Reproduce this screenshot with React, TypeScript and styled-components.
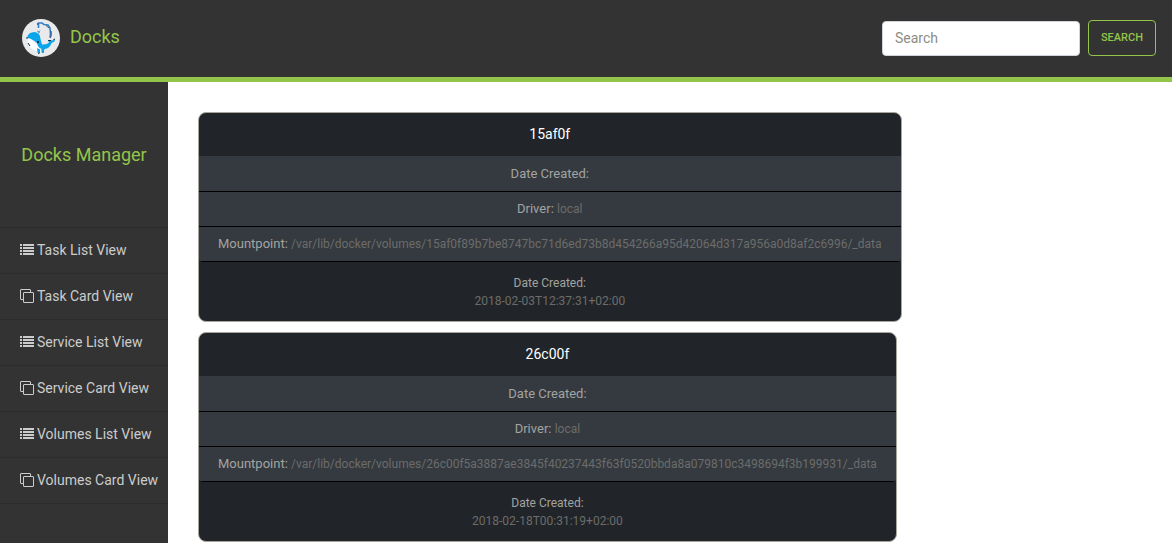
import React from "react";
import styled, { createGlobalStyle } from "styled-components";

const GlobalStyle = createGlobalStyle`
  *, *::before, *::after { box-sizing: border-box; }
  body {
    margin: 0;
    background: #fff;
    font-family: Roboto, "Liberation Sans", sans-serif;
    font-size: 14px;
    line-height: 22px;
  }
`;

const Page = styled.div`
  display: flex;
  flex-direction: column;
  height: 100vh;
  overflow: hidden;
`;

const Navbar = styled.header`
  display: flex;
  align-items: center;
  justify-content: space-between;
  flex: none;
  padding: 18px 16px 20px 22px;
  background: #333;
  border-bottom: 5px solid #93c54b;
`;

const Brand = styled.a`
  display: flex;
  align-items: center;
  gap: 10px;
  color: #93c54b;
  font-size: 18px;
  line-height: 36px;
  text-decoration: none;
`;

const BrandName = styled.span`
  padding-bottom: 1px;
`;

const SearchForm = styled.form`
  display: flex;
  align-items: flex-end;
  gap: 8px;
  padding-top: 2px;
  padding-bottom: 1px;
`;

const SearchInput = styled.input`
  width: 198px;
  height: 35px;
  padding: 0 12px 1px;
  border: 1px solid #ced4da;
  border-radius: 4px;
  background: #fff;
  color: #3e3f3a;
  font: inherit;

  &::placeholder { color: #8e8c84; opacity: 1; }
`;

const SearchButton = styled.button`
  height: 36px;
  padding: 0 12px;
  border: 1px solid #93c54b;
  border-radius: 4px;
  background: transparent;
  color: #93c54b;
  font: 500 11px/20px Roboto, "Liberation Sans", sans-serif;
  text-transform: uppercase;
`;

const Body = styled.div`
  display: flex;
  flex: 1;
  min-height: 0;
`;

const Sidebar = styled.aside`
  flex: none;
  width: 168px;
  background: #333;
`;

const SidebarTitle = styled.h2`
  margin: 0;
  padding: 60px 0 59px;
  color: #93c54b;
  font-size: 18px;
  font-weight: 400;
  line-height: 26px;
  text-align: center;
`;

const Menu = styled.ul`
  margin: 0;
  padding: 0;
  list-style: none;
  border-top: 1px solid #2c2c2c;
`;

const MenuItem = styled.li`
  border-bottom: 1px solid #2c2c2c;
`;

const MenuLink = styled.a`
  display: flex;
  align-items: center;
  gap: 3px;
  padding: 11px 0 12px 20px;
  color: #ccc;
  text-decoration: none;
  white-space: nowrap;
`;

const Content = styled.main`
  display: flex;
  flex: 1;
  flex-direction: column;
  align-items: flex-start;
  gap: 10px;
  min-width: 0;
  padding: 30px;
  overflow: hidden;
`;

const Card = styled.article`
  flex: none;
  overflow: hidden;
  border: 1px solid #a8a69c;
  border-radius: 8px;
  background: #212529;
  color: #a3a3a0;
  text-align: center;
`;

const CardTitle = styled.h3`
  margin: 0;
  padding: 10px 8px 11px;
  color: #fff;
  font-size: 14px;
  font-weight: 400;
  line-height: 22px;
`;

const Details = styled.ul`
  margin: 0;
  padding: 1px 0 0;
  border-radius: 0 0 4px 4px;
  background: #343a40;
  list-style: none;
  overflow: hidden;
`;

const Detail = styled.li`
  padding: 8px 19px;
  border-bottom: 1px solid #000;
  font-size: 13px;
  line-height: 18px;
  white-space: nowrap;
`;

const Value = styled.span`
  color: #6c6c6a;
  font-size: 12px;
`;

const CardFooter = styled.footer`
  display: flex;
  flex-direction: column;
  padding: 12px 8px 11px;
  font-size: 12px;
  line-height: 18px;
`;

function ListIcon() {
  return (
    <svg width="14" height="14" viewBox="0 0 14 14" fill="currentColor" aria-hidden="true">
      {[1, 4, 7, 10].map((y) => (
        <React.Fragment key={y}>
          <rect x="0" y={y} width="2" height="2" />
          <rect x="3" y={y} width="11" height="2" />
        </React.Fragment>
      ))}
    </svg>
  );
}

function CardIcon() {
  return (
    <svg width="14" height="14" viewBox="0 0 14 14" fill="none" stroke="currentColor" aria-hidden="true">
      <path d="M3.5 10.5H1A.5.5 0 0 1 .5 10V1A.5.5 0 0 1 1 .5H10A.5.5 0 0 1 10.500 1V3.500" />
      <rect x="3.500" y="3.500" width="10" height="10" rx=".5" />
    </svg>
  );
}

function Logo() {
  return (
    <svg width="38" height="38" viewBox="0 0 38 38" aria-hidden="true">
      <circle cx="19" cy="19" r="19" fill="#e9eaec" />
      <path d="M16.500 9V4L20 4L22 5.500L26 6L28 9L28.500 15L28 18.500" fill="none" stroke="#3a7fc4" strokeWidth="1.600" />
      <path d="M15.700 6V4M24 6.500L27 9M29.200 12V17L28 19" fill="none" stroke="#24364a" strokeWidth=".8" />
      <path d="M5.500 19L9 20L14 25L18 26L19 32L14 32Q8 29 6 25Z" fill="#fff" />
      <path d="M5 19Q6 13 12.500 13Q18.500 14 18.500 20L20 25.500Q25 26 27 23.500L26 21L30 21.500L33 20L32.500 22.500L29.500 24Q28 29.500 22.500 30L21.500 34L19.500 33V30L17 28.500Q15 26 15 24Q9 19 5 19Z" fill="#0aa5ea" />
      <path d="M15 29L18 30.500V34.500L15.500 33.500Z" fill="#0aa5ea" />
      <path d="M5 18V20M6 24L8 27M26 21.500H29M31.500 20.500L33 20M16 34.500L17.500 34M20.500 33.500L21.500 33" fill="none" stroke="#173248" strokeWidth="1" />
      <rect x="15" y="22" width="2" height="2" fill="#173248" />
      <path d="M15 12L17 13L18 11.500M16 14L18 13" fill="none" stroke="#3a7fc4" strokeWidth=".8" />
    </svg>
  );
}

const menu = [
  { label: "Task List View", Icon: ListIcon },
  { label: "Task Card View", Icon: CardIcon },
  { label: "Service List View", Icon: ListIcon },
  { label: "Service Card View", Icon: CardIcon },
  { label: "Volumes List View", Icon: ListIcon },
  { label: "Volumes Card View", Icon: CardIcon },
];

const volumes = [
  {
    name: "15af0f",
    driver: "local",
    mountpoint: "/var/lib/docker/volumes/15af0f89b7be8747bc71d6ed73b8d454266a95d42064d317a956a0d8af2c6996/_data",
    created: "2018-02-03T12:37:31+02:00",
  },
  {
    name: "26c00f",
    driver: "local",
    mountpoint: "/var/lib/docker/volumes/26c00f5a3887ae3845f40237443f63f0520bbda8a079810c3498694f3b199931/_data",
    created: "2018-02-18T00:31:19+02:00",
  },
];

export default function App() {
  return (
    <Page>
      <GlobalStyle />
      <Navbar>
        <Brand href="#">
          <Logo />
          <BrandName>Docks</BrandName>
        </Brand>
        <SearchForm role="search" onSubmit={(event) => event.preventDefault()}>
          <SearchInput type="text" placeholder="Search" aria-label="Search" />
          <SearchButton type="submit">Search</SearchButton>
        </SearchForm>
      </Navbar>
      <Body>
        <Sidebar>
          <SidebarTitle>Docks Manager</SidebarTitle>
          <nav>
            <Menu>
              {menu.map(({ label, Icon }) => (
                <MenuItem key={label}>
                  <MenuLink href="#">
                    <Icon />
                    {label}
                  </MenuLink>
                </MenuItem>
              ))}
            </Menu>
          </nav>
        </Sidebar>
        <Content>
          {volumes.map((volume) => (
            <Card key={volume.name}>
              <CardTitle>{volume.name}</CardTitle>
              <Details>
                <Detail>Date Created:</Detail>
                <Detail>
                  Driver: <Value>{volume.driver}</Value>
                </Detail>
                <Detail>
                  Mountpoint: <Value>{volume.mountpoint}</Value>
                </Detail>
              </Details>
              <CardFooter>
                <span>Date Created:</span>
                <Value>{volume.created}</Value>
              </CardFooter>
            </Card>
          ))}
        </Content>
      </Body>
    </Page>
  );
}
